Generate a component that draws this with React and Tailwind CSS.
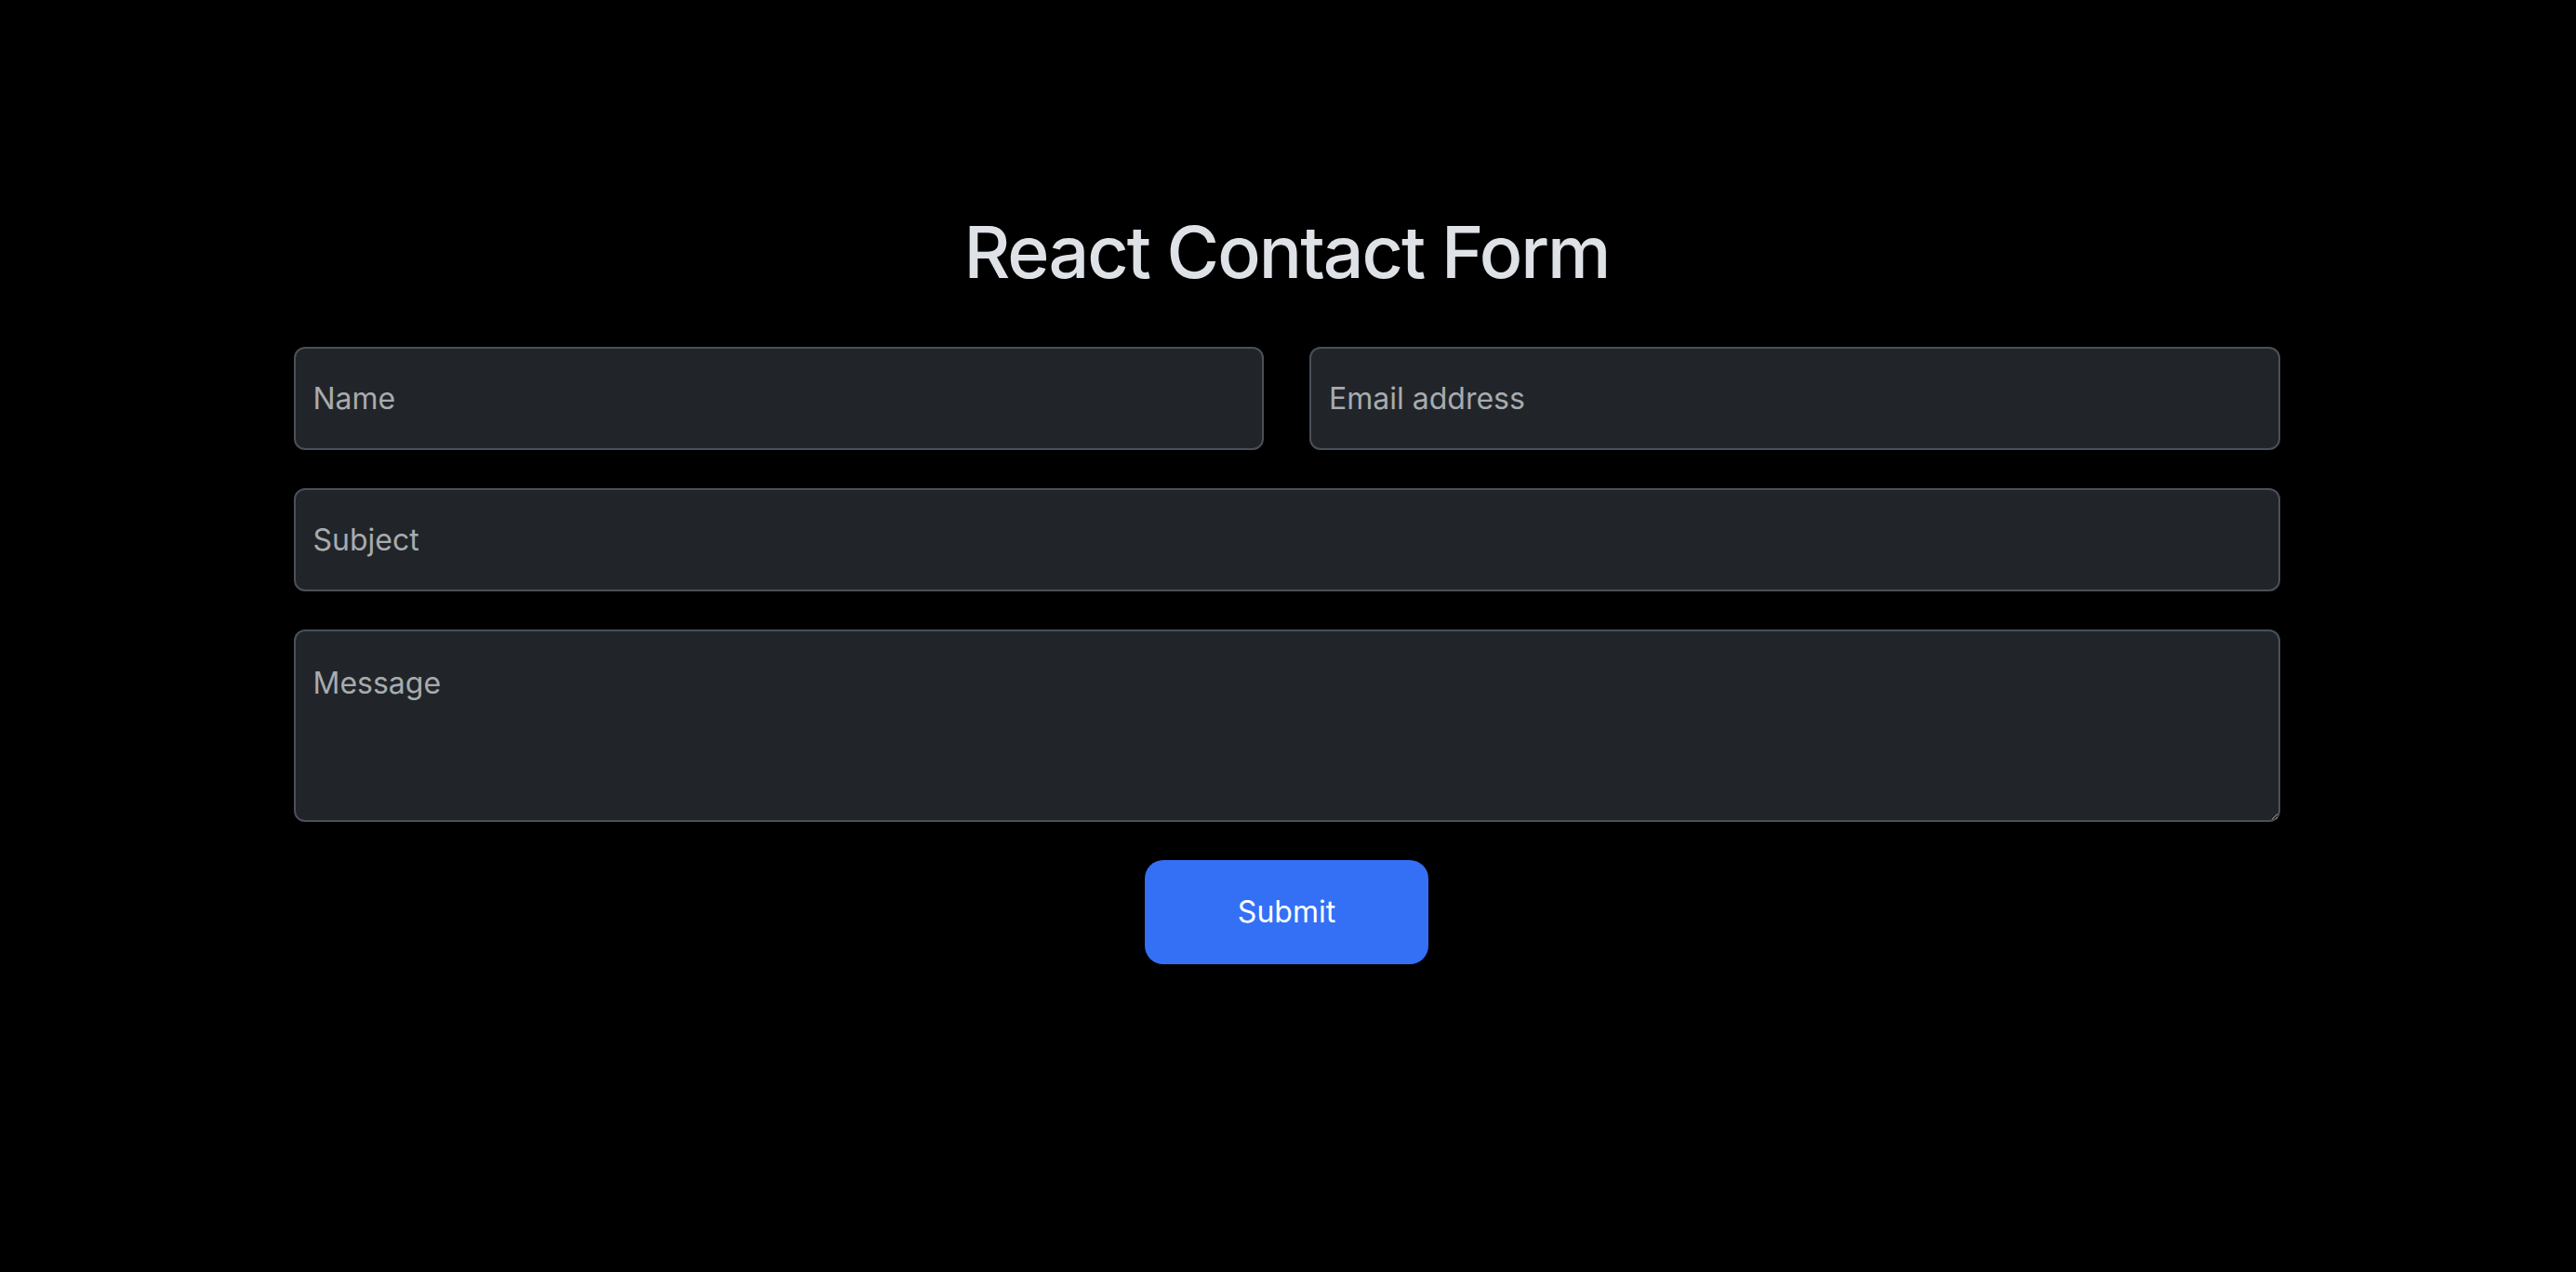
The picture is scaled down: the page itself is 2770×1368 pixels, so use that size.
import React, { useState } from 'react';

const fieldClass =
  'w-full bg-[#212529] border-2 border-[#495057] rounded-[12px] px-[19px] text-[32px] text-[#dee2e6] placeholder:text-[#a7abaf] outline-none';

const App = () => {
  const [form, setForm] = useState({ name: '', email: '', subject: '', message: '' });

  const update = (key) => (e) => setForm({ ...form, [key]: e.target.value });

  const submitHandler = (e) => {
    e.preventDefault();
  };

  return (
    <div className="min-h-screen bg-black flex justify-center pr-[3px]" style={{ fontFamily: 'Inter, "Noto Sans", sans-serif' }}>
      <form onSubmit={submitHandler} className="w-[2136px] pt-[225px] flex flex-col">
        <h1 className="text-center text-[77px] leading-[92px] font-medium tracking-[-0.025em] text-[#dee2e6] mb-[56px]">
          React Contact Form
        </h1>
        <div className="grid grid-cols-2 gap-x-[49px]">
          <input
            type="text"
            value={form.name}
            onChange={update('name')}
            placeholder="Name"
            className={`${fieldClass} h-[111px]`}
          />
          <input
            type="email"
            value={form.email}
            onChange={update('email')}
            placeholder="Email address"
            className={`${fieldClass} h-[111px]`}
          />
        </div>
        <input
          type="text"
          value={form.subject}
          onChange={update('subject')}
          placeholder="Subject"
          className={`${fieldClass} h-[111px] mt-[41px]`}
        />
        <textarea
          value={form.message}
          onChange={update('message')}
          placeholder="Message"
          className={`${fieldClass} h-[207px] mt-[41px] pt-[32px] leading-[48px] resize-y block`}
        />
        <div className="flex justify-center mt-[41px]">
          <button
            type="submit"
            className="w-[305px] h-[112px] rounded-[20px] bg-[#3470f5] text-white text-[32px]"
          >
            Submit
          </button>
        </div>
      </form>
    </div>
  );
};

export default App;
